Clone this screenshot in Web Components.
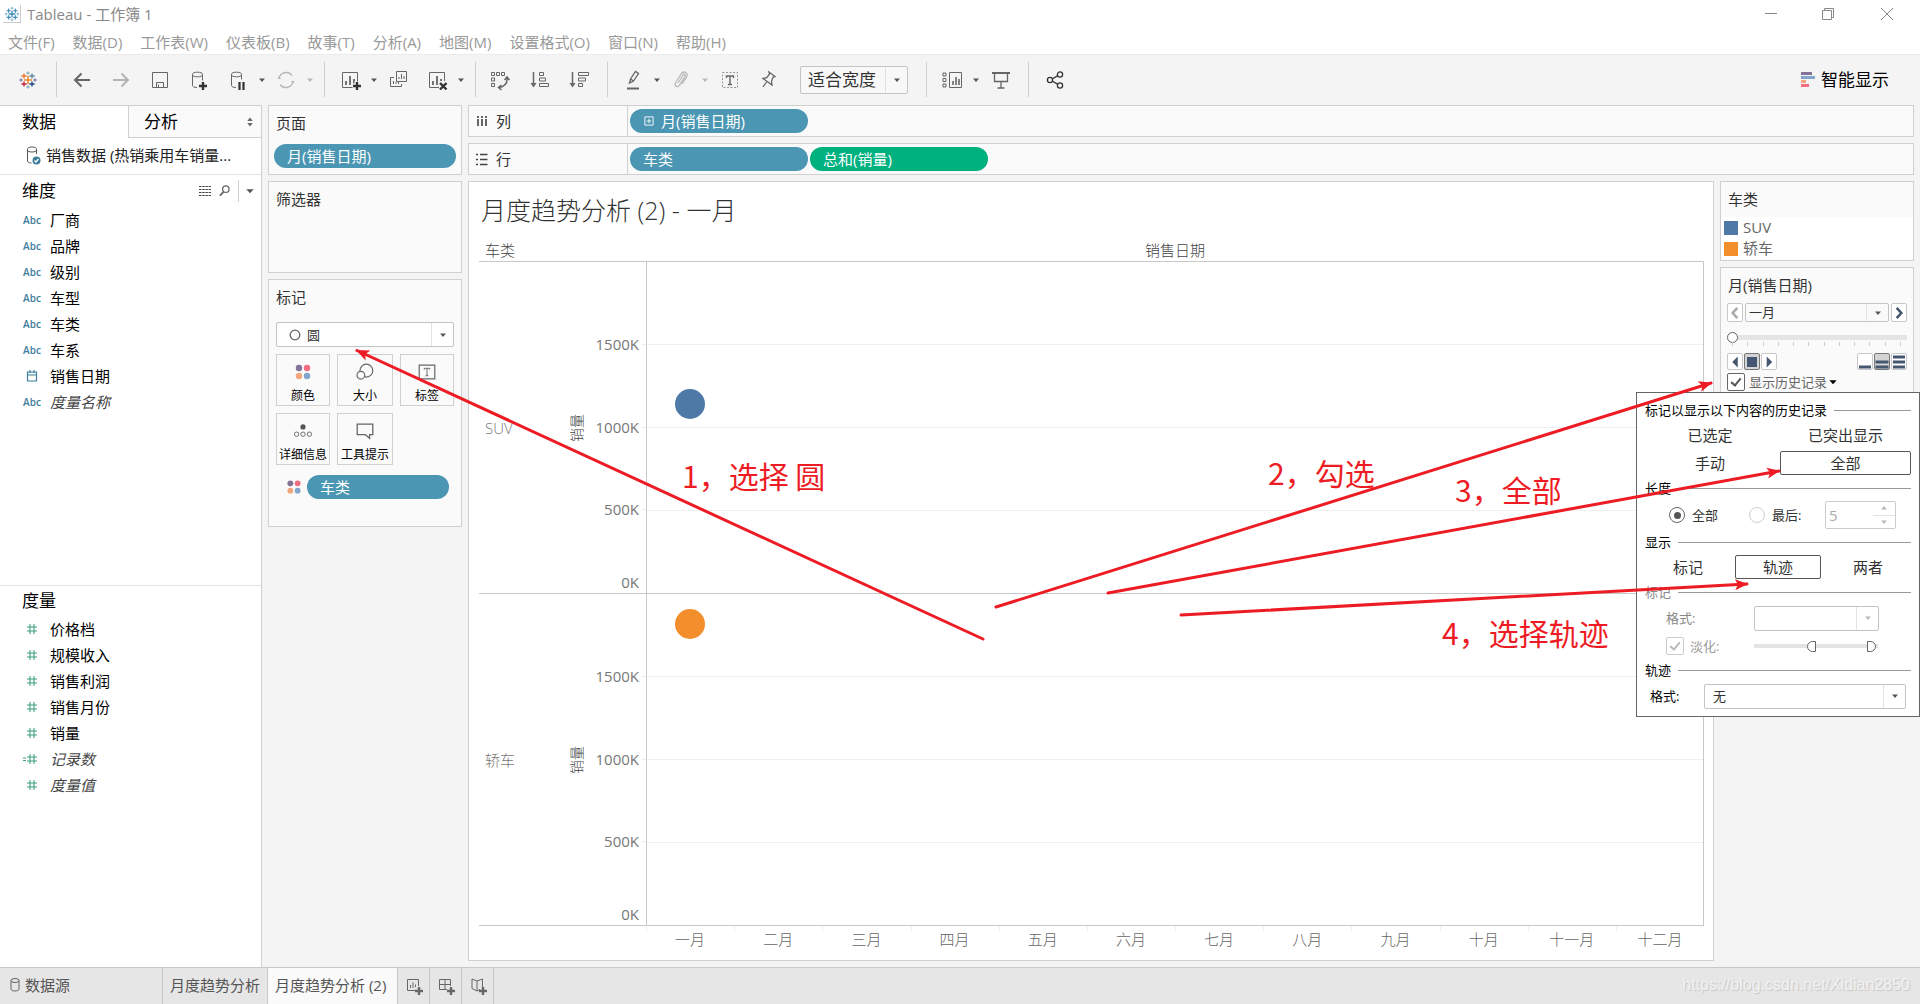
<!DOCTYPE html>
<html lang="zh-CN">
<head>
<meta charset="utf-8">
<title>Tableau - 工作簿 1</title>
<style>
html, body { height: 100%; }
body {
  margin: 0; overflow: hidden; background: #f4f4f4; color: #333;
  font: 15px/20px "Open Sans", "Noto Sans CJK SC", sans-serif;
  --line: #d0d0d0; --card: #fafafa; --teal: #4a96b3; --green: #00b180; --ink: #333;
}
</style>
</head>
<body>
<app-workbook></app-workbook>

<script>
const plus = (x, y, r, c, w = 1) => `<path d="M${x - r} ${y}h${2 * r}M${x} ${y - r}v${2 * r}" stroke="${c}" stroke-width="${w}"/>`;
const logo = (a) => plus(12, 12, 4, a[0], 1.6) + plus(8, 8, 2.6, a[1], 1.3) + plus(16, 8, 2.6, a[2], 1.3) + plus(8, 16, 2.6, a[3], 1.3) + plus(16, 16, 2.6, a[4], 1.3)
  + plus(12, 5, 1.6, a[5]) + plus(12, 19, 1.6, a[5]) + plus(5, 12, 1.6, a[6]) + plus(19, 12, 1.6, a[6]);
const barsBox = '<path d="M4.5 4.500h15v15h-15z"/><path d="M8 17v-4M12 17V8M16 17v-6" stroke-width="1.8"/>';
const ICONS = {
  logo: logo(['#eb8a33', '#e8762c', '#5b879b', '#c72037', '#1f447e', '#7a9fb5', '#59679c']),
  logoBlue: logo(['#3d8ab5', '#3d8ab5', '#3d8ab5', '#3d8ab5', '#3d8ab5', '#6aa5c5', '#6aa5c5']),
  back: '<path d="M20 12H5M11.500 5.500 5 12l6.500 6.500" stroke-width="2"/>',
  forward: '<path d="M4 12h15M12.500 5.500 19 12l-6.500 6.500" stroke-width="2" stroke="#b4b4b4"/>',
  save: '<path d="M4.500 4.500h15v15h-15zM8.500 19.500v-5h7v5M10.500 19v-2.500"/>',
  dbPlus: '<path d="M10 19.500c-3 0-4.500-1-4.500-2V6.500M15.500 6.500v6"/><ellipse cx="10.500" cy="6.500" rx="5" ry="2.300"/><path d="M16 14v8M12 18h8" stroke="#333" stroke-width="2.400"/>',
  dbPause: '<path d="M10 19.500c-3 0-4.500-1-4.500-2V6.500M15.500 6.500v5"/><ellipse cx="10.500" cy="6.500" rx="5" ry="2.300"/><path d="M13.500 14v8M17.500 14v8" stroke="#333" stroke-width="2.200"/>',
  refresh: '<g stroke="#b8b8b8" stroke-width="1.400"><path d="M5 11a7.200 7.200 0 0 1 13-3.500M19 13a7.200 7.200 0 0 1-13 3.500"/><path d="M3.500 11h3.500l-2-3zM20.500 13H17l2 3z" fill="#b8b8b8" stroke="none"/></g>',
  sheetPlus: barsBox + '<path d="M19 13.500v9M14.500 18h9" stroke="#f4f4f4" stroke-width="5"/><path d="M19 14v8M15 18h8" stroke="#333" stroke-width="2.400"/>',
  sheetX: barsBox + '<path d="M14 13h8v9h-8z" fill="#f4f4f4" stroke="none"/><path d="m15 15 6.500 6.500M21.500 15 15 21.500" stroke="#333" stroke-width="2.400"/>',
  duplicate: '<path d="M10.500 3.500h10v10h-10zM8 9.500H4.500v9h11V16"/><path d="M13 11V9M15.500 11V6M18 11V8M7.500 16v-3M10 16v-2M12.500 16v-2"/>',
  swap: '<path d="M2.500 4.500h3v3h-3zM7.500 4.500h3v3h-3zM12.500 4.500h3v3h-3zM2.500 10h3v3h-3zM2.500 15.500h3v3h-3z"/><path d="M18 9.500c.500 5-2 9-8 10M15.500 12l2.500-3 2.500 3M12.500 17l-3 2.500 3 2.500" stroke-width="1.500"/>',
  sortAsc: '<path d="M5.500 4v13" stroke-width="1.500"/><path d="M2.500 15h6l-3 4.500z" fill="#666" stroke="none"/><path d="M11.500 4.500h4v3h-4zM11.500 10h6v3h-6zM11.500 15.500h9v3h-9z"/>',
  sortDesc: '<path d="M5.500 4v13" stroke-width="1.500"/><path d="M2.500 15h6l-3 4.500z" fill="#666" stroke="none"/><path d="M11.500 4.500h10v3h-10zM11.500 10h7v3h-7zM11.500 15.500h4v3h-4z"/>',
  pen: '<path d="m8.500 15 1-4 5-7.500 3 2-5 7.500zM9.500 11l3 2" stroke-width="1.300"/><path d="M6 20.500h12" stroke-width="2"/>',
  clip: '<path d="m9 15 5-8c1-1.600 3-.4 2 1.300l-5.500 9C8.500 20 5 18 6.500 15L12 6c2.500-4 8-1 5.500 3L13 16" stroke="#b8b8b8" stroke-width="1.300"/>',
  text: '<path d="M5.500 4.500h15v15h-15z" stroke="#999" stroke-dasharray="2 1.500"/><path d="M9.500 10V8h7v2M13 8v8M11 16.500h4" stroke-width="1.400"/>',
  pin: '<path d="m13 4 6 4.500-2 .8-1.500 4 .5 3.700-9-6.500 3.700-.8 2.800-3.700zM10.500 14 7 19" stroke-width="1.300"/>',
  cards: '<path d="M9.500 4.500h12v15h-12zM3 5h3v3H3zM3 10.500h3v3H3zM3 16h3v3H3z"/><path d="M13 17v-4M16 17V9M19 17v-6" stroke-width="1.600"/>',
  present: '<path d="M4 5h18" stroke-width="2"/><path d="M6.500 5v8.500h13V5M13 13.500v6M9.500 20h7" stroke-width="1.300"/>',
  share: '<g stroke="#333" stroke-width="1.300"><circle cx="8" cy="12" r="2.600"/><circle cx="18" cy="6.500" r="2.600"/><circle cx="18" cy="17.500" r="2.600"/><path d="m10.500 10.700 5-2.800M10.500 13.300l5 2.800"/></g>',
  showMe: '<g stroke="none"><path d="M5 4h11v3H5z" fill="#847397"/><path d="M5 8h14v3H5z" fill="#84a5cb"/><path d="M5 12h5v3H5z" fill="#f3a57d"/><path d="M5 16h8v3H5z" fill="#f36d80"/></g>',
  source: '<path d="M7.500 5v12c0 1 1.500 2 4 2M16.500 5v5" stroke="#555"/><ellipse cx="12" cy="5.500" rx="4.500" ry="2.500" stroke="#555"/><circle cx="16.500" cy="16.500" r="4" fill="#3f7d9c" stroke="none"/><path d="m14.500 16.500 1.500 1.500 2.500-3" stroke="#fff" stroke-width="1.200"/>',
  list: '<path d="M6 7.500h12M6 10.500h12M6 13.500h12M6 16.500h12" stroke="#444" stroke-dasharray="2.500 .7"/>',
  search: '<circle cx="14" cy="10" r="3.500" stroke-width="1.400"/><path d="m11.500 13-4 4" stroke-width="2"/>',
  updown: '<path d="M9 11h6l-3-4zM9 13h6l-3 4z" fill="#666" stroke="none"/>',
  caret: '<path d="M9 10.500h6L12 14z" fill="#555" stroke="none"/>',
  caretOff: '<path d="M9 10.500h6L12 14z" fill="#b8b8b8" stroke="none"/>',
  up: '<path d="M9 13.500h6L12 10z" fill="#b8b8b8" stroke="none"/>',
  caretBig: '<path d="M8 10h8l-4 4.500z" fill="#555" stroke="none"/>',
  caretBlack: '<path d="M8 10h8l-4 4.500z" fill="#000" stroke="none"/>',
  columns: '<path d="M8 7v2M12 7v2M16 7v2M8 10v7M12 10v7M16 10v7" stroke-width="2"/>',
  rows: '<path d="M6 7.500h2M6 12.500h2M6 17.500h2M10 7.500h7.500M10 12.500h7.500M10 17.500h7.500" stroke="#444" stroke-width="1.500"/>',
  calendar: '<path d="M7.500 8h9v9h-9zM7.500 11h9M10 6v3M14 6v3" stroke="#3f7d9c" stroke-width="1.200"/>',
  hash: '<path d="M7 10h10M7 14h10M10 7v10M14 7v10" stroke="#3fa07c" stroke-width="1.100"/>',
  hashEq: '<path d="M7 10h10M7 14h10M10 7v10M14 7v10M3 11h3M3 13.500h3" stroke="#3fa07c" stroke-width="1.100"/>',
  dots: '<g stroke="none"><circle cx="7.600" cy="7.600" r="3.500" fill="#847397"/><circle cx="16.400" cy="7.600" r="3.500" fill="#f36d80"/><circle cx="7.600" cy="16.400" r="3.500" fill="#f3a57d"/><circle cx="16.400" cy="16.400" r="3.500" fill="#84a5cb"/></g>',
  size: '<circle cx="13.500" cy="10.500" r="7" stroke-width="1.300"/><circle cx="7.500" cy="15.500" r="4.200" fill="#fafafa" stroke-width="1.300"/>',
  label: '<path d="M3.500 4.500h17v15h-17z" stroke-width="1.300"/><path d="M9 9.500V8h6v1.500M12 8v8M10.500 16h3"/>',
  detail: '<circle cx="12" cy="7.500" r="2.800" fill="#555" stroke="none"/><circle cx="5" cy="15.500" r="2.400"/><circle cx="12" cy="15.500" r="2.400"/><circle cx="19" cy="15.500" r="2.400"/>',
  tooltip: '<path d="M3.500 4.500h17v11.500h-3.500v4L12.500 16h-9z" stroke-width="1.400"/>',
  expand: '<path d="M7.500 7.500h9v9h-9zM9.500 12h5M12 9.500v5" stroke="#fff"/>',
  db: '<path d="M8 7.500v8.500c0 1.200 1.500 2 4 2s4-.8 4-2V7.500"/><ellipse cx="12" cy="7.500" rx="4" ry="2"/>',
  newSheet: '<path d="M15 17.500H5.500v-11h11V13M8.500 15v-3M11 15V9.500M13.500 14v-2.500"/><path d="M17 14v8M13 18h8" stroke-width="2.400"/>',
  newDash: '<path d="M13 16.500H5.500v-10h11V13M11 6.500v10M5.500 11.500h11"/><path d="M17 14v8M13 18h8" stroke-width="2.400"/>',
  newStory: '<path d="M14 16.500 11 18l-5-2.500V6l5 2 5.500-2v8M11 8v10"/><path d="M17 14v8M13 18h8" stroke-width="2.400"/>',
  min: '<path d="M6 11.500h12" stroke="#888"/>',
  restore: '<path d="M5.500 8.500h9v9h-9zM7.500 8.500v-2h9v9h-2" stroke="#888"/>',
  close: '<path d="m6 6 12 12M18 6 6 18" stroke="#888"/>',
  circle: '<circle cx="12" cy="12" r="4.800" stroke-width="1.300"/>',
  prev: '<path d="m14.500 6.500-5 5.500 5 5.500" stroke="#aaa" stroke-width="2.800"/>',
  next: '<path d="m9.500 6.500 5 5.500-5 5.500" stroke="#455670" stroke-width="2.800"/>',
  playBack: '<path d="M15 6v12l-6-6z" fill="#455670" stroke="none"/>',
  stop: '<path d="M7 7h10v10H7z" fill="#455670" stroke="none"/>',
  play: '<path d="M9.500 6v12l6-6z" fill="#455670" stroke="none"/>',
  slow: '<path d="M6 17h12" stroke="#455670" stroke-width="3"/>',
  normal: '<path d="M5.500 12h13M5.500 17h13" stroke="#455670" stroke-width="3"/>',
  fast: '<path d="M6 7h12M6 12h12M6 17h12" stroke="#455670" stroke-width="3"/>'
};

const BASE = `*{box-sizing:border-box}:host{display:block;box-sizing:border-box}:host([hidden]){display:none}
button,select,input{font:inherit;color:inherit;margin:0}button{background:none;border:0;padding:0;text-align:center}ul,h1,h2,h3,p{margin:0;padding:0;font:inherit;list-style:none}a{color:inherit;text-decoration:none}`;

function define(name, css, html) {
  customElements.define(name, class extends HTMLElement {
    connectedCallback() {
      if (this.shadowRoot) return;
      const t = document.createElement('template');
      t.innerHTML = `<style>${BASE}${css}</style>` + (typeof html === 'function' ? html(this) : html);
      this.attachShadow({ mode: 'open' }).append(t.content.cloneNode(true));
    }
  });
}
const icon = (n, s) => `<ui-icon name="${n}"${s ? ` size="${s}"` : ''}></ui-icon>`;
const at = (el, n) => el.getAttribute(n) || '';

define('ui-icon', ':host{display:block;flex:none}svg{display:block}', el => {
  const s = at(el, 'size') || 24;
  return `<svg width="${s}" height="${s}" viewBox="0 0 24 24" fill="none" stroke="#666" aria-hidden="true">${ICONS[at(el, 'name')]}</svg>`;
});

define('ui-select', `
:host{display:block;position:relative;height:24px;border:1px solid #c4c4c4;border-radius:2px;background:var(--select-bg,#fff)}
.row{display:flex;align-items:center;height:100%}
select{flex:1;min-width:0;height:100%;appearance:none;background:none;border:0;outline:0;padding:0 0 0 var(--indent,10px);font-size:inherit;opacity:1}
.arrow{display:flex;align-items:center;justify-content:center;width:22px;height:100%;border-left:1px solid #e2e2e2;pointer-events:none}`,
el => `<div class="row"><slot></slot><select aria-label="${at(el, 'label')}"${el.hasAttribute('disabled') ? ' disabled' : ''}><option>${at(el, 'value')}</option></select><span class="arrow">${icon(el.hasAttribute('disabled') ? 'caretOff' : 'caret')}</span></div>`);

define('field-pill', `
:host{display:flex;align-items:center;height:24px;border-radius:12px;background:var(--pill,var(--teal));color:#fff;padding:0 13px;gap:1px}
:host([wide]){width:178px}`, '<slot name="icon"></slot><span><slot></slot></span>');

define('shelf-card', `
:host{background:var(--card);border:1px solid var(--line);padding:0 6px}
h2{line-height:34px;padding-left:1px}`, el => `<h2>${at(el, 'heading')}</h2><slot></slot>`);

define('app-titlebar', `
:host{background:#fff;color:#888;padding-bottom:1px}
.top{display:flex;align-items:center;height:28px;padding:0 4px 0 2px}
h1{flex:1;margin-left:6px;padding-bottom:1px}
.logo{display:flex;align-items:center;justify-content:center;width:18px;height:18px;margin-left:1px;border:1px solid #ccc;border-width:0 1px 1px 0}
.top button{display:flex;justify-content:center;width:58px}
nav{display:flex;gap:18px;padding:4px 8px 0;height:25px;color:#999}`,
`<div class="top"><span class="logo">${icon('logoBlue', 20)}</span><h1>Tableau - 工作簿 1</h1>
<button aria-label="最小化">${icon('min')}</button><button aria-label="还原">${icon('restore')}</button><button aria-label="关闭">${icon('close')}</button></div>
<nav>${['文件(F)', '数据(D)', '工作表(W)', '仪表板(B)', '故事(T)', '分析(A)', '地图(M)', '设置格式(O)', '窗口(N)', '帮助(H)'].map(t => `<a href="#">${t}</a>`).join('')}</nav>`);

const btn = (n, l) => `<button class="b" aria-label="${l}">${icon(n)}</button>`;
const car = (off) => `<button class="c" aria-label="更多">${icon(off ? 'caretOff' : 'caret')}</button>`;
define('app-toolbar', `
:host{display:flex;align-items:center;height:51px;padding:0 24px 1px 16px;border-top:1px solid #ebebeb}
.b + .b{margin-left:15px}
.sep{width:1px;height:35px;background:#cfcfcf;margin:0 13px 0 16px}
.c + .sep{margin-left:2px}
ui-select{width:108px;height:28px;margin:0 2px 0 20px;font-size:17px;--indent:7px;--select-bg:#f8f8f8}
.show{display:flex;align-items:center;margin-left:auto;gap:1px;font-size:17px;color:#000;margin-right:7px}`,
`${btn('logo', '开始页面')}<i class="sep"></i>
${btn('back', '撤消')}${btn('forward', '重做')}${btn('save', '保存')}${btn('dbPlus', '新建数据源')}${btn('dbPause', '暂停自动更新')}${car()}${btn('refresh', '运行更新')}${car(1)}<i class="sep"></i>
${btn('sheetPlus', '新建工作表')}${car()}${btn('duplicate', '复制')}${btn('sheetX', '清除')}${car()}<i class="sep"></i>
${btn('swap', '交换行和列')}${btn('sortAsc', '升序')}${btn('sortDesc', '降序')}<i class="sep"></i>
${btn('pen', '突出显示')}${car()}${btn('clip', '分组')}${car(1)}${btn('text', '显示标签')}${btn('pin', '固定轴')}
<ui-select value="适合宽度" label="适合"></ui-select><i class="sep"></i>
${btn('cards', '显示卡')}${car()}${btn('present', '演示模式')}<i class="sep"></i>${btn('share', '共享')}
<button class="show">${icon('showMe')}<span>智能显示</span></button>`);

define('field-item', `
:host{display:flex;align-items:center;height:26px;padding-left:20px;gap:6px;color:#000}
:host([derived]){color:#444;font-style:italic}
.k{display:flex;justify-content:center;width:24px;font:600 10px/20px "Open Sans",sans-serif;color:#3f7d9c}`,
el => `<span class="k">${at(el, 'kind') === 'abc' ? 'Abc' : icon(at(el, 'kind'))}</span><span><slot></slot></span>`);

const items = (a) => a.map(([k, t, d]) => `<field-item role="listitem" kind="${k}"${d ? ' derived' : ''}>${t}</field-item>`).join('');
define('data-pane', `
:host{display:flex;flex-direction:column;width:262px;background:#fff;border:1px solid var(--line);border-width:1px 1px 0 0;color:#000}
.tabs{display:flex;height:32px;font-size:17px}
.tabs button{text-align:left;padding-left:22px;flex:0 0 128px}
.tabs button + button{display:flex;flex:1;align-items:center;justify-content:space-between;background:var(--card);border:1px solid var(--line);border-width:0 0 1px 1px;padding:0 0 0 15px}
.src{display:flex;align-items:center;height:37px;gap:2px;padding-left:20px;border-bottom:1px solid #e2e2e2;color:#222}
.src span{flex:0 1 auto;padding-bottom:2px}
section{flex:410 1 0}section + section{flex-grow:381;border-top:1px solid #e2e2e2}
.h{display:flex;align-items:center;height:32px;padding-left:22px;font-size:17px}
section + section .h{height:30px}
.h h2{flex:1}.h i{width:1px;height:22px;background:var(--line);margin-left:3px}
.h .s{margin-right:-4px}`,
`<div class="tabs"><button>数据</button><button>分析${icon('updown', 22)}</button></div>
<div class="src">${icon('source')}<span>销售数据 (热销乘用车销量...</span></div>
<section><div class="h"><h2>维度</h2><button class="s" aria-label="查看数据">${icon('list')}</button><button aria-label="查找字段">${icon('search', 22)}</button><i></i><button aria-label="菜单">${icon('caretBig', 22)}</button></div>
<div role="list">${items([['abc', '厂商'], ['abc', '品牌'], ['abc', '级别'], ['abc', '车型'], ['abc', '车类'], ['abc', '车系'], ['calendar', '销售日期'], ['abc', '度量名称', 1]])}</div></section>
<section><div class="h"><h2>度量</h2></div>
<div role="list">${items([['hash', '价格档'], ['hash', '规模收入'], ['hash', '销售利润'], ['hash', '销售月份'], ['hash', '销量'], ['hashEq', '记录数', 1], ['hash', '度量值', 1]])}</div></section>`);

define('marks-card', `
:host{background:var(--card);border:1px solid var(--line);padding:0 7px;height:248px}
h2{line-height:34px}
ui-select{margin-top:8px;height:25px;font-size:13px;--indent:0px}
.slot-icon{margin-left:6px}
.grid{display:grid;grid-template-columns:54px 56px 54px;justify-content:space-between;gap:7px 0;margin:7px 0 10px}
.grid button{display:flex;flex-direction:column;align-items:center;justify-content:space-between;height:52px;border:1px solid var(--line);padding:6px 0 0;font-size:12px;line-height:18px;color:#000;white-space:nowrap}
.f{display:flex;align-items:center;gap:3px;padding:0 5px 0 8px}
field-pill{flex:1}`,
`<h2>标记</h2><ui-select value="圆" label="标记类型"><span class="slot-icon">${icon('circle')}</span></ui-select>
<div class="grid"><button>${icon('dots', 22)}颜色</button><button>${icon('size', 22)}大小</button><button>${icon('label', 22)}标签</button><button>${icon('detail', 22)}详细信息</button><button>${icon('tooltip', 22)}工具提示</button></div>
<div class="f">${icon('dots', 20)}<field-pill>车类</field-pill></div>`);

define('shelf-row', `
:host{display:flex;align-items:center;height:32px;background:var(--card);border:1px solid var(--line)}
.n{display:flex;align-items:center;gap:2px;width:159px;height:100%;padding-left:1px;border-right:1px solid var(--line);margin-right:2px}
.p{display:flex;gap:2px}`,
el => `<div class="n">${icon(at(el, 'icon'))}<span>${at(el, 'name')}</span></div><div class="p"><slot></slot></div>`);

const pane = (cat, color, v) => `<div class="pane"><div class="cat">${cat}</div><div class="ax">销量</div>
<div class="lab">${['1500K', '1000K', '500K', '0K'].map(t => `<div><span>${t}</span><i></i></div>`).join('')}</div>
<div class="plot"><i></i><i></i><i></i><i></i><b style="background:${color};bottom:${v}%"></b></div></div>`;
define('trend-sheet', `
:host{display:flex;flex-direction:column;background:#fff;border:1px solid var(--line);padding:0 9px 8px 10px;color:#777;font-weight:300}
h1{font-size:25px;line-height:57px;color:#333;padding:0 0 1px 2px}
.hd{display:flex;line-height:21px;color:#444;font-size:15px}
.hd span:first-child{width:167px;padding-left:6px}.hd span + span{flex:1;text-align:center}
.panes{display:flex;flex-direction:column;flex:1;border-top:1px solid #c8c8c8}
.pane{display:flex;flex:1;border-bottom:1px solid #c8c8c8;align-items:center}
.cat{width:88px;padding-left:6px}
.ax{width:20px;writing-mode:vertical-rl;text-orientation:sideways;transform:rotate(180deg);color:#444;font-size:14px}
.lab{display:flex;flex-direction:column;height:100%;width:59px;font-weight:400}
.lab div{display:flex;flex:1;align-items:flex-end;justify-content:flex-end;gap:3px}
.lab span{margin-bottom:-9px}.lab div:last-child span{margin-bottom:1px}
.lab i{width:4px;height:1px;background:#eee}.lab div:last-child i{background:none}
.plot{position:relative;display:flex;flex-direction:column;flex:1;height:100%;border:1px solid #c8c8c8;border-width:0 1px}
.plot i{flex:1;border-bottom:1px solid #f0f0f0}.plot i:nth-child(4){border:0}
.plot b{position:absolute;left:calc(100% / 24);width:30px;height:30px;border-radius:50%;margin:0 0 -15px -16px}
.months{display:flex;line-height:26px;margin-left:167px;color:#666}
.months span{flex:1;text-align:center;background:linear-gradient(#eee,#eee) 0 0/1px 5px no-repeat}`,
`<h1>月度趋势分析 (2) - 一月</h1><div class="hd"><span>车类</span><span>销售日期</span></div>
<div class="panes">${pane('SUV', '#4e79a7', 57)}${pane('轿车', '#f28e2b', 91)}</div>
<div class="months">${['一', '二', '三', '四', '五', '六', '七', '八', '九', '十', '十一', '十二'].map(t => `<span>${t}月</span>`).join('')}</div>`);

define('color-legend', `
:host{background:#fff;border:1px solid var(--line);height:80px}
h2{background:var(--card);line-height:34px;padding:0 0 1px 7px}
li{display:flex;align-items:center;gap:5px;height:21px;padding-left:3px;color:#666}
li i{width:14px;height:14px;background:#4e79a7}li + li i{background:#f28e2b}li span{padding-bottom:1px}`,
'<h2>车类</h2><ul><li><i></i><span>SUV</span></li><li><i></i><span>轿车</span></li></ul>');

const CHECK = `input[type=checkbox]{appearance:none;width:18px;height:18px;border:1px solid #666;border-radius:2px;background:#fff;display:grid;place-items:center}
input[type=checkbox]:checked::after{content:"";width:8px;height:4px;border:2px solid #555;border-width:0 0 2px 2px;transform:translateY(-1px) rotate(-50deg)}
input[type=checkbox]:disabled{border-color:#ccc}input[type=checkbox]:disabled::after{border-color:#bbb}`;

define('page-control', CHECK + `
:host{position:relative;background:var(--card);border:1px solid var(--line);border-bottom:0;padding:0 6px;height:125px}
h2{line-height:34px;padding:0 0 1px 1px}
.nav{display:flex;gap:2px;align-items:center}
.nav ui-select{flex:1;height:19px;font-size:13px;line-height:17px;--indent:3px;--select-bg:var(--card)}
.sq{display:flex;align-items:center;justify-content:center;width:16px;height:19px;border:1px solid #c8c8c8;border-radius:2px;background:#fff;overflow:hidden}
.ctl .sq{height:17px}.sq.on{background:#d4d4d4;border-color:#777}
input[type=range]{display:block;appearance:none;width:100%;height:12px;background:linear-gradient(#e4e4e4,#e4e4e4) 0 50%/100% 5px no-repeat;margin-top:9px}
input[type=range]::-webkit-slider-thumb{appearance:none;width:11px;height:11px;border:1px solid #666;border-radius:50%;background:#fff}
.ticks{display:flex;justify-content:space-between;padding:0 6px 0 5px;height:4px;margin-top:-1px}.ticks i{width:1px;background:#ccc}
.ctl{display:flex;gap:1px;margin-top:7px}.ctl .sp{flex:1}
.hist{display:flex;align-items:center;height:18px;margin-top:3px;font-size:13px;color:#666}
.hist label{padding-left:4px;line-height:18px}
.hist button{margin-left:-5px}
history-popup{position:absolute;top:100%;right:-7px;z-index:2}`,
`<h2>月(销售日期)</h2>
<div class="nav"><button class="sq" aria-label="上一个">${icon('prev', 22)}</button><ui-select value="一月" label="月(销售日期)"></ui-select><button class="sq" aria-label="下一个">${icon('next', 22)}</button></div>
<input type="range" min="1" max="12" value="1" aria-label="月份"><div class="ticks">${'<i></i>'.repeat(12)}</div>
<div class="ctl"><button class="sq" aria-label="倒放">${icon('playBack', 22)}</button><button class="sq on" aria-label="停止">${icon('stop', 24)}</button><button class="sq" aria-label="播放">${icon('play', 22)}</button><i class="sp"></i>
<button class="sq" aria-label="慢速">${icon('slow', 24)}</button><button class="sq on" aria-label="中速">${icon('normal', 24)}</button><button class="sq" aria-label="快速">${icon('fast', 24)}</button></div>
<div class="hist"><input type="checkbox" id="h" checked><label for="h">显示历史记录</label><button aria-label="历史记录选项">${icon('caretBlack', 22)}</button></div>
<history-popup></history-popup>`);

define('history-popup', CHECK + `
:host{width:284px;background:#fff;border:1px solid #666;padding:7px 8px 7px;color:#333}
h3{display:flex;align-items:center;gap:7px;font-size:13px;line-height:20px;color:#000}
h3::after{content:"";flex:1;height:1px;background:#999}
h3.off{color:#888}
.g2{display:grid;grid-template-columns:132px 131px;gap:4px;margin:3px 0 3px;justify-content:end}
.g3{display:flex;justify-content:space-between;margin:3px 0}
.g3 button{width:86px}
.g2 button,.g3 button{height:24px;border:1px solid transparent;border-radius:2px}
.g2 button.on,.g3 button.on{border-color:#555}
.len{display:flex;align-items:center;height:28px;margin:3px 0;padding-left:24px;font-size:13px}
input[type=radio]{appearance:none;width:16px;height:16px;border:1px solid #ccc;border-radius:50%;display:grid;place-items:center}
input[type=radio]:checked{border-color:#666}input[type=radio]:checked::after{content:"";width:7px;height:7px;border-radius:50%;background:#555}
.len label{padding-left:7px}.len label[for=r1]{width:64px}.len label[for=r2]{width:60px}
.spin{display:flex;width:71px;height:28px;border:1px solid #ccc;border-radius:2px;color:#aaa}
.spin input{flex:1;min-width:0;border:0;background:none;padding:0 0 0 3px;font-size:15px;appearance:textfield;color:#aaa}
.spin input::-webkit-inner-spin-button{display:none}
.spin span{display:flex;flex-direction:column;width:22px;align-items:center}
.spin button{flex:1;min-height:0;width:100%;display:flex;align-items:center;justify-content:center;overflow:hidden}
.spin button + button{border-top:1px solid #e4e4e4}
.fmt{display:flex;align-items:center;justify-content:space-between;height:26px;margin:3px 0 5px;padding:0 32px 0 21px;font-size:13px;color:#888}
.fmt ui-select{width:125px;height:25px}
.fade{display:flex;align-items:center;height:20px;padding:0 33px 0 21px;margin-bottom:4px;font-size:13px;color:#999}
.fade label{flex:1;padding-left:6px}
.two{display:grid;width:124px}
.two input{grid-area:1/1;appearance:none;width:100%;height:12px;background:none}
.two input:first-child{background:linear-gradient(#e4e4e4,#e4e4e4) 0 50%/100% 4px no-repeat}
.two input::-webkit-slider-thumb{appearance:none;width:9px;height:11px;border:1px solid #666;border-radius:0 6px 6px 0;background:#fff}
.two input:first-child::-webkit-slider-thumb{border-radius:6px 0 0 6px}
.last{display:flex;align-items:center;justify-content:space-between;height:26px;margin-top:3px;padding:0 5px;font-size:13px;color:#000}
.last ui-select{width:202px;height:25px;--indent:8px;color:#333}`,
`<h3>标记以显示以下内容的历史记录</h3>
<div class="g2"><button>已选定</button><button>已突出显示</button><button>手动</button><button class="on">全部</button></div>
<h3>长度</h3>
<div class="len"><input type="radio" name="len" id="r1" checked><label for="r1">全部</label><input type="radio" name="len" id="r2"><label for="r2">最后:</label>
<div class="spin"><input type="number" value="5" disabled aria-label="最后"><span><button aria-label="增加" disabled>${icon('up')}</button><button aria-label="减少" disabled>${icon('caretOff')}</button></span></div></div>
<h3>显示</h3>
<div class="g3"><button>标记</button><button class="on">轨迹</button><button>两者</button></div>
<h3 class="off">标记</h3>
<div class="fmt"><span>格式:</span><ui-select disabled value="" label="标记格式"></ui-select></div>
<div class="fade"><input type="checkbox" id="f" checked disabled><label for="f">淡化:</label><div class="two"><input type="range" value="46" disabled aria-label="淡化起点"><input type="range" value="98" disabled aria-label="淡化终点"></div></div>
<h3>轨迹</h3>
<div class="last"><span>格式:</span><ui-select value="无" label="轨迹格式"></ui-select></div>`);

define('sheet-tabs', `
:host{display:flex;height:37px;background:#e6e6e6;border-top:1px solid #c8c8c8;color:#555}
button{display:flex;align-items:center;height:100%;border-right:1px solid #c8c8c8;padding:0 7px 2px 7px}
.src{width:163px;padding-left:3px}.src span{margin-left:-2px}
.on{background:var(--card);min-width:130px}.add{width:32px;padding:0 4px 2px;justify-content:center}
p{margin-left:auto;align-self:center;padding:0 10px 2px 0;font:16px/20px "Liberation Sans",sans-serif;color:#f2f2f2;text-shadow:1px 1px 1px #c4c4c4}`,
`<button class="src">${icon('db')}<span>数据源</span></button><button>月度趋势分析</button><button class="on">月度趋势分析 (2)</button>
<button class="add" aria-label="新建工作表">${icon('newSheet')}</button><button class="add" aria-label="新建仪表板">${icon('newDash')}</button><button class="add" aria-label="新建故事">${icon('newStory')}</button>
<p>https://blog.csdn.net/Xidian2850</p>`);

define('note-layer', `
:host{position:absolute;inset:0;z-index:5;pointer-events:none}
svg{display:block;width:1920px;height:1004px}
text{font:30px "Noto Sans CJK SC",sans-serif;fill:#ed1c24}`,
`<svg viewBox="0 0 1920 1004"><defs><marker id="a" markerUnits="userSpaceOnUse" markerWidth="14" markerHeight="12" refX="12" refY="6" orient="auto"><path d="M13 6 0 .5 3 6 0 11.500z" fill="#ed1c24"/></marker></defs>
<g stroke="#ed1c24" stroke-width="3" stroke-linecap="round"><path d="M983 639 357 350.500" marker-end="url(#a)"/><path d="M996 607 1711 383" marker-end="url(#a)"/><path d="m1108 593 671-122" marker-end="url(#a)"/><path d="m1181 615 566-31" marker-end="url(#a)"/></g>
<text x="682" y="488">1，选择 圆</text><text x="1268" y="485">2，勾选</text><text x="1455" y="502">3，全部</text><text x="1442" y="645">4，选择轨迹</text></svg>`);

define('app-workbook', `
:host{position:relative;display:flex;flex-direction:column;height:100vh;overflow:hidden}
main{display:flex;flex:1;min-height:0;gap:6px;padding-right:6px}
.cards{display:flex;flex-direction:column;gap:6px;width:194px}
.pages{height:70px}.pages field-pill{margin:4px -1px 0}
.filters{height:92px}
.view{display:flex;flex-direction:column;flex:1;gap:6px;min-width:0;padding-bottom:6px}
.body{display:flex;flex:1;gap:6px;min-height:0}
trend-sheet{flex:1}
.side{display:flex;flex-direction:column;gap:6px;width:194px}`,
`<app-titlebar></app-titlebar><app-toolbar></app-toolbar>
<main><data-pane></data-pane>
<div class="cards"><shelf-card class="pages" heading="页面"><field-pill>月(销售日期)</field-pill></shelf-card><shelf-card class="filters" heading="筛选器"></shelf-card><marks-card></marks-card></div>
<div class="view"><shelf-row icon="columns" name="列"><field-pill wide><ui-icon slot="icon" name="expand" size="22" style="margin-left:-5px"></ui-icon>月(销售日期)</field-pill></shelf-row>
<shelf-row icon="rows" name="行"><field-pill wide>车类</field-pill><field-pill wide style="--pill:var(--green)">总和(销量)</field-pill></shelf-row>
<div class="body"><trend-sheet></trend-sheet><div class="side"><color-legend></color-legend><page-control></page-control></div></div></div></main>
<sheet-tabs></sheet-tabs><note-layer></note-layer>`);
</script>
</body>
</html>
